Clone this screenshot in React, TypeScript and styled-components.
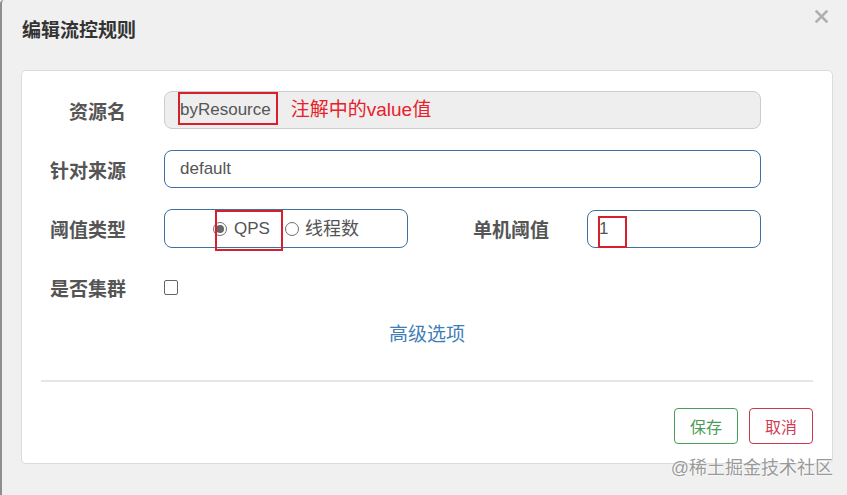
import React from 'react';
import styled, { createGlobalStyle } from 'styled-components';

const GlobalStyle = createGlobalStyle`
  html, body {
    margin: 0;
    padding: 0;
  }
  body {
    background: #f0f0f0;
    font-family: "Liberation Sans", "Noto Sans CJK SC", sans-serif;
  }
`;

const Dialog = styled.div`
  position: relative;
  box-sizing: border-box;
  width: 847px;
  height: 495px;
  background: #f0f0f0;
  border-left: 2px solid #8e8e8e;
  border-top-left-radius: 4px;
  overflow: hidden;
`;

const Header = styled.div`
  display: flex;
  justify-content: space-between;
  align-items: flex-start;
  box-sizing: border-box;
  height: 70px;
  padding: 0 19px 0 20px;
`;

const Title = styled.h4`
  margin: 19px 0 0;
  font-size: 19px;
  line-height: 24px;
  font-weight: bold;
  color: #333;
`;

const Close = styled.button`
  margin-top: 10px;
  padding: 0;
  border: none;
  background: none;
  width: 13px;
  height: 13px;
  display: flex;
  cursor: pointer;
`;

const Card = styled.div`
  box-sizing: border-box;
  height: 394px;
  margin: 0 14px 0 19px;
  padding: 20px 19px 19px;
  background: #fff;
  border: 1px solid #dcdcdc;
  border-radius: 5px;
`;

const Form = styled.div`
  display: flex;
  flex-direction: column;
  gap: 21px;
`;

const Row = styled.div`
  display: grid;
  grid-template-columns: 85px 1fr;
  column-gap: 38px;
  align-items: center;
  height: 38px;
  padding-right: 52px;
`;

const Label = styled.label`
  text-align: right;
  font-size: 19px;
  font-weight: bold;
  color: #555;
  white-space: nowrap;
`;

const Field = styled.div<{ $disabled?: boolean; $pad?: number }>`
  box-sizing: border-box;
  height: 38px;
  display: flex;
  align-items: center;
  padding: 0 ${p => p.$pad ?? 15}px;
  border: 1px solid ${p => (p.$disabled ? '#cccccc' : '#3e6f9f')};
  border-radius: 8px;
  background: ${p => (p.$disabled ? '#eeeeee' : '#ffffff')};
  font-size: 17px;
  line-height: 20px;
  color: #555;
`;

const Mark = styled.span<{ $t: number; $r: number; $b: number; $l: number }>`
  position: relative;
  display: inline-flex;
  align-items: center;
  line-height: 20px;

  &::after {
    content: '';
    position: absolute;
    top: ${p => p.$t}px;
    right: ${p => p.$r}px;
    bottom: ${p => p.$b}px;
    left: ${p => p.$l}px;
    border: 2px solid #d6202e;
    pointer-events: none;
  }
`;

const Note = styled.span`
  margin-left: 20px;
  font-size: 19px;
  color: #e8202a;
`;

const Split = styled.div`
  display: flex;
  align-items: center;
`;

const RadioBox = styled.div`
  box-sizing: border-box;
  width: 244px;
  height: 39px;
  display: flex;
  align-items: center;
  justify-content: center;
  gap: 15px;
  border: 1px solid #3e6f9f;
  border-radius: 8px;
  font-size: 17px;
  color: #555;
`;

const Option = styled.span`
  display: inline-flex;
  align-items: center;
`;

const Radio = styled.span<{ $checked?: boolean; $gap: number }>`
  box-sizing: border-box;
  width: 14px;
  height: 14px;
  margin-right: ${p => p.$gap}px;
  border-radius: 50%;
  border: 1px solid #6f6f6f;
  background: #fff;
  display: flex;
  align-items: center;
  justify-content: center;

  &::after {
    content: '';
    display: ${p => (p.$checked ? 'block' : 'none')};
    width: 8px;
    height: 8px;
    border-radius: 50%;
    background: #666;
  }
`;

const OptionText = styled.span<{ $cjk?: boolean }>`
  font-size: ${p => (p.$cjk ? 18 : 17)}px;
  line-height: 20px;
`;

const SubLabel = styled(Label)`
  width: 141px;
  margin-right: 38px;
  flex: none;
`;

const Grow = styled.div`
  flex: 1;
`;

const Checkbox = styled.span`
  box-sizing: border-box;
  width: 14px;
  height: 15px;
  border: 1px solid #666;
  border-radius: 2px;
  background: #fff;
`;

const Advanced = styled.a`
  display: block;
  margin-top: 17px;
  text-align: center;
  font-size: 19px;
  line-height: 24px;
  color: #3f7fb6;
  text-decoration: none;
`;

const Divider = styled.hr`
  margin: 33px 0 0;
  height: 2px;
  border: none;
  background: #e6e6e6;
`;

const Footer = styled.div`
  display: flex;
  justify-content: flex-end;
  gap: 11px;
  margin-top: 26px;
`;

const Button = styled.button<{ $tone: 'save' | 'cancel' }>`
  box-sizing: border-box;
  width: 64px;
  height: 36px;
  padding: 0;
  border-radius: 4px;
  background: #fff;
  font-family: inherit;
  font-size: 16px;
  border: 1px solid ${p => (p.$tone === 'save' ? '#4a9c58' : '#c6394f')};
  color: ${p => (p.$tone === 'save' ? '#4a9c58' : '#d23a55')};
`;

const Watermark = styled.div`
  position: absolute;
  right: 14px;
  bottom: 17px;
  font-size: 18px;
  line-height: 20px;
  color: #9a9a9a;
  text-shadow: 0 0 2px #fff, 0 0 2px #fff;
`;

const App: React.FC = () => {
  return (
    <>
      <GlobalStyle />
      <Dialog>
        <Header>
          <Title>编辑流控规则</Title>
          <Close aria-label="close">
            <svg width="13" height="13" viewBox="0 0 13 13">
              <path d="M1.5 1.5 L11.5 11.5 M11.5 1.5 L1.5 11.5" stroke="#b0b0b0" strokeWidth="2.6" strokeLinecap="square" />
            </svg>
          </Close>
        </Header>

        <Card>
          <Form>
            <Row>
              <Label>资源名</Label>
              <Field $disabled>
                <Mark $t={-8} $r={-7} $b={-5} $l={-2}>byResource</Mark>
                <Note>注解中的value值</Note>
              </Field>
            </Row>

            <Row>
              <Label>针对来源</Label>
              <Field>default</Field>
            </Row>

            <Row>
              <Label>阈值类型</Label>
              <Split>
                <RadioBox>
                  <Mark $t={-9} $r={-13} $b={-12} $l={2}>
                    <Radio $checked $gap={7} />
                    <OptionText>QPS</OptionText>
                  </Mark>
                  <Option>
                    <Radio $gap={6} />
                    <OptionText $cjk>线程数</OptionText>
                  </Option>
                </RadioBox>
                <SubLabel>单机阈值</SubLabel>
                <Grow>
                  <Field $pad={11}>
                    <Mark $t={-3} $r={-19} $b={-9} $l={-1}>1</Mark>
                  </Field>
                </Grow>
              </Split>
            </Row>

            <Row>
              <Label>是否集群</Label>
              <Split>
                <Checkbox />
              </Split>
            </Row>
          </Form>

          <Advanced href="#">高级选项</Advanced>
          <Divider />

          <Footer>
            <Button $tone="save">保存</Button>
            <Button $tone="cancel">取消</Button>
          </Footer>
        </Card>

        <Watermark>@稀土掘金技术社区</Watermark>
      </Dialog>
    </>
  );
};

export default App;
